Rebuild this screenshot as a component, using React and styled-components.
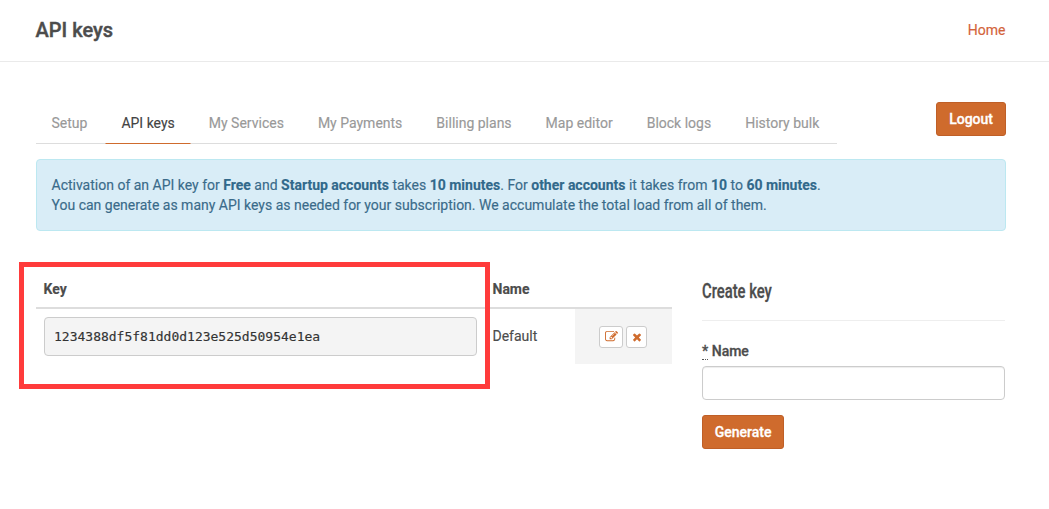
import React from "react";
import styled, { createGlobalStyle, css } from "styled-components";

const GlobalStyle = createGlobalStyle`
  * { box-sizing: border-box; }
  body {
    margin: 0;
    background: #fff;
    color: #4c4c4c;
    font: 14px/20px Roboto, "Liberation Sans", sans-serif;
    -webkit-text-stroke: 0.15px currentColor;
  }
`;

const Header = styled.header`
  display: flex;
  align-items: center;
  justify-content: space-between;
  height: 62px;
  padding: 0 43.5px 2px 35.5px;
  border-bottom: 1px solid #eaeaea;
`;

const Title = styled.h1`
  margin: 0;
  font-size: 20px;
  line-height: 24px;
  font-weight: 500;
  -webkit-text-stroke: 0.4px currentColor;
`;

const HomeLink = styled.a`
  color: #d3633a;
  text-decoration: none;
`;

const Content = styled.main`
  padding: 40px 43px 0 36px;
`;

const TopBar = styled.div`
  display: flex;
  justify-content: space-between;
  align-items: flex-start;
`;

const Tabs = styled.nav`
  display: flex;
  margin-left: -0.5px;
  border-bottom: 1px solid #ddd;
`;

const Tab = styled.a`
  padding: 10px 15px 10px;
  margin-right: 2px;
  border: 1px solid transparent;
  border-bottom: 1px solid ${(p) => (p.$active ? "#cf6b2d" : "#ddd")};
  margin-bottom: -1px;
  color: ${(p) => (p.$active ? "#444" : "#999")};
  white-space: nowrap;
`;

const Button = styled.button`
  height: 34px;
  padding: 0 ${(p) => p.$pad ?? 12}px;
  border: 1px solid #bf5f27;
  border-radius: 3px;
  background: #cf6b2d;
  color: #fff;
  font: 500 14px/20px Roboto, "Liberation Sans", sans-serif;
  -webkit-text-stroke: 0.3px currentColor;
`;

const Notice = styled.section`
  height: 72px;
  margin-top: 15px;
  padding: 15px 14.5px;
  border: 1px solid #bce8f1;
  border-radius: 4px;
  background: #d9edf7;
  color: #3a6b8a;

  p { margin: 0; white-space: nowrap; }
  b { font-weight: 700; color: #31698b; }
`;

const Columns = styled.div`
  display: grid;
  grid-template-columns: 636px 303px;
  column-gap: 30px;
  margin-top: 41px;
`;

const KeysPanel = styled.section`
  position: relative;
`;

const Row = styled.div`
  display: grid;
  grid-template-columns: 449px 90px 97px;
  ${(p) =>
    p.$head
      ? css`
          height: 37px;
          border-bottom: 2px solid #ddd;
          font-weight: 700;
        `
      : css`
          height: 55px;
        `}
`;

const Cell = styled.div`
  padding: 7px 8px 8px 7.5px;
`;

const NameCell = styled(Cell)`
  padding-top: 17px;
`;

const ActionCell = styled.div`
  display: flex;
  align-items: center;
  justify-content: center;
  gap: 3px;
  padding-right: 1px;
  background: #f4f4f4;
`;

const KeyValue = styled.pre`
  height: 39px;
  margin: 1px 0 0 0.5px;
  padding: 9px;
  border: 1px solid #ccc;
  border-radius: 4px;
  background: #f4f4f4;
  color: #333;
  font: 13px/19px "DejaVu Sans Mono", "Liberation Mono", monospace;
`;

const IconButton = styled.button`
  display: flex;
  align-items: center;
  justify-content: center;
  width: ${(p) => p.$width}px;
  height: 22px;
  padding: 0;
  border: 1px solid #ccc;
  border-radius: 3px;
  background: #fff;
  color: #cf6b2d;
`;

const Highlight = styled.div`
  position: absolute;
  left: -17px;
  top: -10px;
  width: 471px;
  height: 127px;
  border: 5px solid #ff3b3b;
  pointer-events: none;
`;

const CreateForm = styled.form`
  display: flex;
  flex-direction: column;
  align-items: flex-start;
`;

const FormTitle = styled.h2`
  align-self: stretch;
  height: 49px;
  margin: 0;
  padding-top: 6px;
  border-bottom: 1px solid #eee;
  font-size: 20px;
  line-height: 26px;
  font-weight: 500;
  -webkit-text-stroke: 0.3px currentColor;

  span {
    display: inline-block;
    transform: scaleX(0.74);
    transform-origin: left;
    white-space: nowrap;
  }
`;

const Label = styled.label`
  margin: 20px 0 5px;
  font-weight: 500;
  -webkit-text-stroke: 0.3px currentColor;

  abbr {
    text-decoration: none;
    border-bottom: 1px dotted #555;
  }
`;

const Input = styled.input`
  width: 100%;
  height: 34px;
  margin-bottom: 15px;
  border: 1px solid #ccc;
  border-radius: 4px;
  background: #fff;
  box-shadow: inset 0 1px 1px rgba(0, 0, 0, 0.075);
`;

const tabs = [
  "Setup",
  "API keys",
  "My Services",
  "My Payments",
  "Billing plans",
  "Map editor",
  "Block logs",
  "History bulk",
];

const EditIcon = () => (
  <svg width="13" height="13" viewBox="0 0 1792 1792" fill="currentColor">
    <path d="M888 1184l116-116-152-152-116 116v56h96v96h56zm440-720q-16-16-33 1l-350 350q-17 17-1 33t33-1l350-350q17-17 1-33zm80 594v190q0 119-84.5 203.5t-203.5 84.5h-832q-119 0-203.5-84.5t-84.5-203.5v-832q0-119 84.5-203.5t203.5-84.5h832q63 0 117 25 15 7 18 23 3 17-9 29l-49 49q-14 14-32 8-23-6-45-6h-832q-66 0-113 47t-47 113v832q0 66 47 113t113 47h832q66 0 113-47t47-113v-126q0-13 9-22l64-64q15-15 35-7t20 29zm-96-738l288 288-672 672h-288v-288zm444 132l-92 92-288-288 92-92q28-28 68-28t68 28l152 152q28 28 28 68t-28 68z" />
  </svg>
);

const RemoveIcon = () => (
  <svg width="12" height="12" viewBox="0 0 1792 1792" fill="currentColor">
    <path d="M1490 1322q0 40-28 68l-136 136q-28 28-68 28t-68-28l-294-294-294 294q-28 28-68 28t-68-28l-136-136q-28-28-28-68t28-68l294-294-294-294q-28-28-28-68t28-68l136-136q28-28 68-28t68 28l294 294 294-294q28-28 68-28t68 28l136 136q28 28 28 68t-28 68l-294 294 294 294q28 28 28 68z" />
  </svg>
);

export default function App() {
  return (
    <>
      <GlobalStyle />
      <Header>
        <Title>API keys</Title>
        <HomeLink>Home</HomeLink>
      </Header>
      <Content>
        <TopBar>
          <Tabs>
            {tabs.map((name) => (
              <Tab key={name} $active={name === "API keys"}>
                {name}
              </Tab>
            ))}
          </Tabs>
          <Button>Logout</Button>
        </TopBar>
        <Notice>
          <p>
            Activation of an API key for <b>Free</b> and <b>Startup accounts</b> takes{" "}
            <b>10 minutes</b>. For <b>other accounts</b> it takes from <b>10</b> to{" "}
            <b>60 minutes</b>.
          </p>
          <p>
            You can generate as many API keys as needed for your subscription. We
            accumulate the total load from all of them.
          </p>
        </Notice>
        <Columns>
          <KeysPanel>
            <Row $head>
              <Cell>Key</Cell>
              <Cell>Name</Cell>
            </Row>
            <Row>
              <Cell>
                <KeyValue>1234388df5f81dd0d123e525d50954e1ea</KeyValue>
              </Cell>
              <NameCell>Default</NameCell>
              <ActionCell>
                <IconButton $width={24} type="button" aria-label="Edit">
                  <EditIcon />
                </IconButton>
                <IconButton $width={21} type="button" aria-label="Remove">
                  <RemoveIcon />
                </IconButton>
              </ActionCell>
            </Row>
            <Highlight />
          </KeysPanel>
          <CreateForm>
            <FormTitle>
              <span>Create key</span>
            </FormTitle>
            <Label htmlFor="key-name">
              <abbr>*</abbr> Name
            </Label>
            <Input id="key-name" />
            <Button type="button" $pad={11.7}>
              Generate
            </Button>
          </CreateForm>
        </Columns>
      </Content>
    </>
  );
}
